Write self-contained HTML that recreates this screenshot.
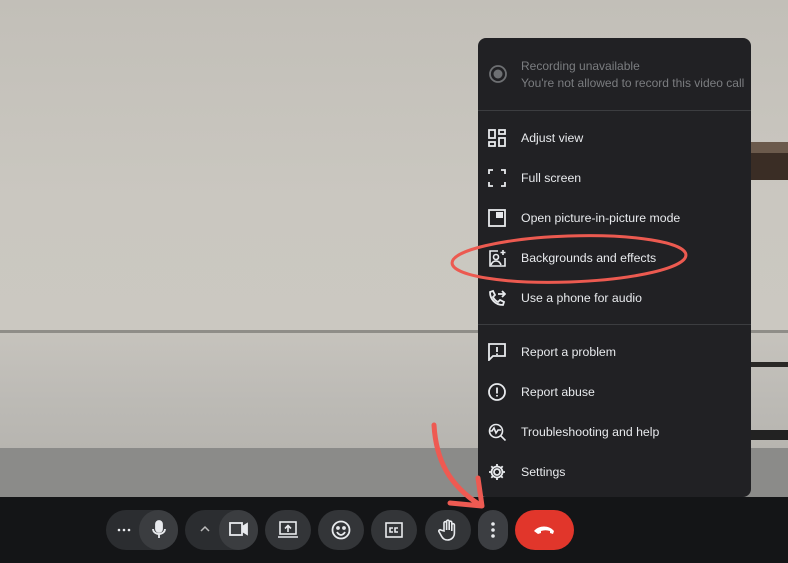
<!DOCTYPE html>
<html><head><meta charset="utf-8"><style>
*{margin:0;padding:0;box-sizing:border-box}
body{width:788px;height:563px;overflow:hidden;position:relative;font-family:"Liberation Sans",sans-serif;background:#c5c2bb}
.abs{position:absolute}
.menu{position:absolute;left:478px;top:38px;width:273px;height:459px;background:#212124;border-radius:8px}
.item{position:absolute;left:0;width:273px;height:40px;color:#e8eaed;font-size:12.3px}
.item span{position:absolute;left:43px;top:14px}
.item svg{position:absolute;left:10px;top:12px}
.div{position:absolute;left:0;width:273px;height:1px;background:#3c3d40}
.bar{position:absolute;left:0;top:497px;width:788px;height:66px;background:#141517}
.btn{position:absolute;top:510px;height:40px;border-radius:20px;background:#333538}
</style></head><body>
<div class="abs" style="left:0;top:0;width:788px;height:331px;background:linear-gradient(#c2bfb8,#cac7c0 60%,#cbc8c1)"></div>
<div class="abs" style="left:0;top:330px;width:788px;height:3px;background:#8f8d88"></div>
<div class="abs" style="left:0;top:333px;width:788px;height:115px;background:linear-gradient(#c6c3bd,#bcbab5 60%,#b7b5b0)"></div>
<div class="abs" style="left:0;top:448px;width:788px;height:49px;background:#8b8b89"></div>
<div class="abs" style="left:751px;top:142px;width:37px;height:11px;background:#6b5a4c"></div>
<div class="abs" style="left:751px;top:153px;width:37px;height:27px;background:#3a2d25"></div>
<div class="abs" style="left:751px;top:362px;width:37px;height:5px;background:#2a2826"></div>
<div class="abs" style="left:751px;top:430px;width:37px;height:10px;background:#222"></div>

<div class="menu">
 <svg class="abs" style="left:10px;top:26px" width="20" height="20"><circle cx="10" cy="10" r="8" fill="none" stroke="#6e7073" stroke-width="1.8"/><circle cx="10" cy="10" r="4.5" fill="#6e7073"/></svg>
 <div class="abs" style="left:43px;top:20px;color:#7b7d80;font-size:12px;line-height:17px">Recording unavailable<br>You're not allowed to record this video call</div>
 <div class="div" style="top:72px"></div>
 <div class="item" style="top:79px"><svg width="18" height="18" fill="none" stroke="#e8eaed" stroke-width="1.8"><rect x="1" y="1" width="6" height="8"/><rect x="11" y="1" width="6" height="4"/><rect x="1" y="13" width="6" height="4"/><rect x="11" y="9" width="6" height="8"/></svg><span>Adjust view</span></div>
 <div class="item" style="top:119px"><svg width="18" height="18" fill="none" stroke="#e8eaed" stroke-width="1.8"><path d="M1 5V1h4M13 1h4v4M17 13v4h-4M5 17H1v-4"/></svg><span>Full screen</span></div>
 <div class="item" style="top:159px"><svg width="18" height="18" fill="none" stroke="#e8eaed" stroke-width="1.8"><rect x="1" y="1" width="16" height="16"/><rect x="8" y="3" width="7" height="6" fill="#e8eaed" stroke="none"/></svg><span>Open picture-in-picture mode</span></div>
 <div class="item" style="top:199px"><svg width="18" height="18" fill="none" stroke="#e8eaed" stroke-width="1.6"><path d="M10 2H2v15h15V9"/><circle cx="8" cy="8" r="2.5"/><path d="M3 16c1-3 3-4 5-4s4 1 5 4"/><path d="M15 1v5M12.5 3.5h5"/></svg><span>Backgrounds and effects</span></div>
 <div class="item" style="top:239px"><svg width="18" height="18" fill="none" stroke="#e8eaed" stroke-width="1.8"><path d="M2 3c0 7 5 13 13 13l1-3-4-2-2 2c-2-1-4-3-5-5l2-2-2-4z"/><path d="M10 5h7M14 2l3 3-3 3"/></svg><span>Use a phone for audio</span></div>
 <div class="div" style="top:286px"></div>
 <div class="item" style="top:293px"><svg width="18" height="18" fill="none" stroke="#e8eaed" stroke-width="1.8"><path d="M1 1h16v12H5l-4 4z"/><path d="M9 4v5M9 10.5v1.5"/></svg><span>Report a problem</span></div>
 <div class="item" style="top:333px"><svg width="18" height="18" fill="none" stroke="#e8eaed" stroke-width="1.8"><circle cx="9" cy="9" r="8"/><path d="M9 4.5v6M9 12v1.5"/></svg><span>Report abuse</span></div>
 <div class="item" style="top:373px"><svg width="18" height="18" fill="none" stroke="#e8eaed" stroke-width="1.6"><circle cx="8" cy="8" r="6.5"/><path d="M12.5 12.5l5 5M1 8h3l2-3 2 5 2-3h3"/></svg><span>Troubleshooting and help</span></div>
 <div class="item" style="top:413px"><svg width="18" height="18" fill="none" stroke="#e8eaed" stroke-width="1.8"><circle cx="9" cy="9" r="3"/><path d="M9 1v3M9 14v3M1 9h3M14 9h3M3.3 3.3l2.1 2.1M12.6 12.6l2.1 2.1M3.3 14.7l2.1-2.1M12.6 5.4l2.1-2.1"/><circle cx="9" cy="9" r="5.5"/></svg><span>Settings</span></div>
</div>

<div class="bar"></div>
<div class="btn" style="left:106px;width:72px;background:#2b2d30"></div>
<div class="btn" style="left:139px;width:39px;background:#3b3d40"></div>
<svg class="abs" style="left:117px;top:528px" width="14" height="4" fill="#e8eaed"><circle cx="2" cy="2" r="1.3"/><circle cx="7" cy="2" r="1.3"/><circle cx="12" cy="2" r="1.3"/></svg>
<svg class="abs" style="left:150px;top:520px" width="18" height="20" fill="none" stroke="#e8eaed" stroke-width="1.8"><rect x="6" y="1" width="6" height="11" rx="3" fill="#e8eaed"/><path d="M3 9c0 3 3 5 6 5s6-2 6-5M9 14v4"/></svg>
<div class="btn" style="left:185px;width:73px;background:#2b2d30"></div>
<div class="btn" style="left:219px;width:39px;background:#3b3d40"></div>
<svg class="abs" style="left:199px;top:525px" width="12" height="8" fill="none" stroke="#bbb" stroke-width="1.5"><path d="M2 6l4-4 4 4"/></svg>
<svg class="abs" style="left:229px;top:521px" width="20" height="16" fill="none" stroke="#e8eaed" stroke-width="1.8"><rect x="1" y="2" width="12" height="12"/><path d="M13 6l5-3v10l-5-3" fill="#e8eaed"/></svg>
<div class="btn" style="left:265px;width:46px"></div>
<svg class="abs" style="left:278px;top:521px" width="20" height="18" fill="none" stroke="#e8eaed" stroke-width="1.6"><rect x="2" y="1" width="16" height="12"/><path d="M0 16h20M10 11V5M7 7.5l3-3 3 3"/></svg>
<div class="btn" style="left:318px;width:46px"></div>
<svg class="abs" style="left:331px;top:520px" width="20" height="20" fill="none" stroke="#e8eaed" stroke-width="1.8"><circle cx="10" cy="10" r="8.5"/><circle cx="7" cy="8" r="1" fill="#e8eaed"/><circle cx="13" cy="8" r="1" fill="#e8eaed"/><path d="M6 12c1 2 3 3 4 3s3-1 4-3"/></svg>
<div class="btn" style="left:371px;width:46px"></div>
<svg class="abs" style="left:385px;top:522px" width="18" height="16" fill="none" stroke="#e8eaed" stroke-width="1.6"><rect x="1" y="1" width="16" height="14"/><path d="M8 6H5v4h3M13 6h-3v4h3"/></svg>
<div class="btn" style="left:425px;width:46px"></div>
<svg class="abs" style="left:438px;top:519px" width="20" height="22" fill="none" stroke="#e8eaed" stroke-width="1.6"><path d="M6 12V4a1.3 1.3 0 012.6 0v7V2.5a1.3 1.3 0 012.6 0V11V3.5a1.3 1.3 0 012.6 0V12V6a1.3 1.3 0 012.6 0v8c0 4-3 7-7 7-3 0-5-2-6-4l-2.5-4.5a1.3 1.3 0 012.2-1.3z"/></svg>
<div class="btn" style="left:478px;width:30px;background:#3c3e42"></div>
<svg class="abs" style="left:490px;top:521px" width="6" height="18" fill="#e8eaed"><circle cx="3" cy="3" r="1.8"/><circle cx="3" cy="9" r="1.8"/><circle cx="3" cy="15" r="1.8"/></svg>
<div class="btn" style="left:515px;width:59px;background:#e1362b"></div>
<svg class="abs" style="left:533px;top:525px" width="22" height="10" fill="#fff"><path d="M1 6c5-6 15-6 20 0l-1 3-3-1v-2c-3-1-6-1-9 0v2l-3 1z"/></svg>

<svg class="abs" style="left:0;top:0" width="788" height="563" fill="none">
<ellipse cx="569" cy="259" rx="117" ry="23" stroke="#ec5a50" stroke-width="3" transform="rotate(-2 569 259)"/>
<path d="M434 425c2 35 15 60 46 80" stroke="#ee5a52" stroke-width="5" stroke-linecap="round"/>
<path d="M450 503l32 3-4-28" stroke="#ee5a52" stroke-width="5" stroke-linecap="round" stroke-linejoin="round"/>
</svg>
</body></html>
